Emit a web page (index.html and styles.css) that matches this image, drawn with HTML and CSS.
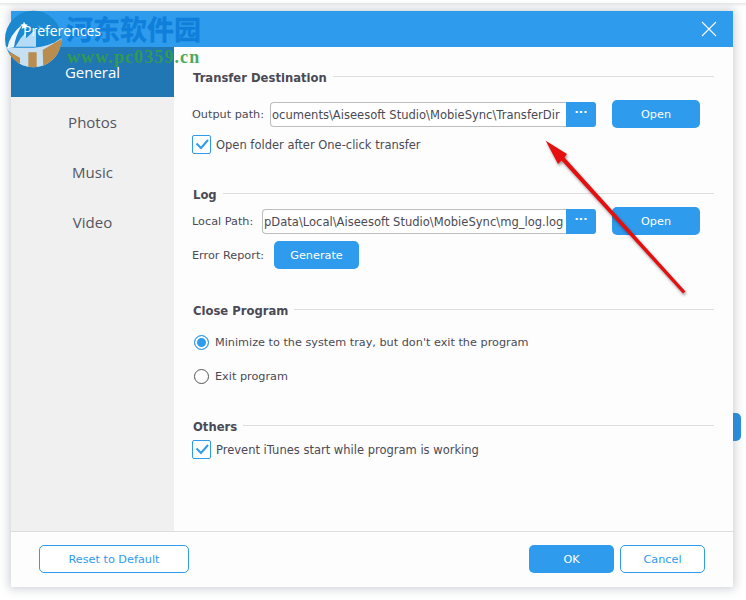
FILE: index.html
```html
<!DOCTYPE html>
<html lang="en">
<head>
<meta charset="utf-8">
<title>Preferences</title>
<link rel="stylesheet" href="styles.css">
</head>
<body>
<div class="side-tab"></div>
<div class="window">
  <header class="titlebar">
    <span class="title">Preferences</span>
    <svg class="close" width="16" height="16" viewBox="0 0 16 16"><path d="M1 1L15 15M15 1L1 15" stroke="#fff" stroke-width="1.1" fill="none"/></svg>
  </header>
  <div class="body">
    <nav class="sidebar">
      <div class="nav-item active">General</div>
      <div class="nav-item">Photos</div>
      <div class="nav-item">Music</div>
      <div class="nav-item">Video</div>
    </nav>
    <main class="content">
      <section class="section sec-transfer">
        <div class="heading"><span>Transfer Destination</span><i></i></div>
        <div class="row path-row">
          <label class="label w-output">Output path:</label>
          <div class="field"><div class="input">ocuments\Aiseesoft Studio\MobieSync\TransferDir</div><div class="dots">···</div></div>
          <button class="btn open">Open</button>
        </div>
        <div class="row check-row">
          <span class="check"><svg width="14" height="12" viewBox="0 0 14 12"><path d="M1.5 5.5L6 10L13 2" stroke="#2e9bec" stroke-width="2" fill="none"/></svg></span>
          <span class="text">Open folder after One-click transfer</span>
        </div>
      </section>
      <section class="section sec-log">
        <div class="heading"><span>Log</span><i></i></div>
        <div class="row path-row log-row">
          <label class="label w-local">Local Path:</label>
          <div class="field"><div class="input">pData\Local\Aiseesoft Studio\MobieSync\mg_log.log</div><div class="dots">···</div></div>
          <button class="btn open">Open</button>
        </div>
        <div class="row report-row">
          <label class="label w-report">Error Report:</label>
          <button class="btn generate">Generate</button>
        </div>
      </section>
      <section class="section sec-close">
        <div class="heading"><span>Close Program</span><i></i></div>
        <div class="row radio-row">
          <span class="radio on"></span>
          <span class="text">Minimize to the system tray, but don't exit the program</span>
        </div>
        <div class="row radio-row">
          <span class="radio"></span>
          <span class="text">Exit program</span>
        </div>
      </section>
      <section class="section sec-others">
        <div class="heading"><span>Others</span><i></i></div>
        <div class="row check-row">
          <span class="check"><svg width="14" height="12" viewBox="0 0 14 12"><path d="M1.5 5.5L6 10L13 2" stroke="#2e9bec" stroke-width="2" fill="none"/></svg></span>
          <span class="text">Prevent iTunes start while program is working</span>
        </div>
      </section>
    </main>
  </div>
  <footer class="footer">
    <button class="btn ghost reset">Reset to Default</button>
    <div class="footer-right">
      <button class="btn ok">OK</button>
      <button class="btn ghost cancel">Cancel</button>
    </div>
  </footer>
</div>

<svg class="logo" width="58" height="58" viewBox="12 15 174 174">
  <defs><clipPath id="disc"><circle cx="100" cy="102" r="85"/></clipPath></defs>
  <g clip-path="url(#disc)">
    <rect x="0" y="0" width="200" height="200" fill="#1b88cf"/>
    <path d="M15 125Q25 140 45 150L60 190H160L190 95Q150 125 100 128Q60 130 15 125Z" fill="#c6dff1"/>
    <path d="M128 135L190 98L185 150L130 190Z" fill="#b88d4f"/>
    <path d="M85 142H110V190H85Z" fill="#b88d4f"/>
    <path d="M28 140Q45 150 60 158V190H40Z" fill="#b88d4f"/>
    <path d="M46 125L62 100L78 82V125ZM78 100L108 72V125H78Z" fill="#b5dbf6"/>
    <path d="M125 70L172 90L165 112L128 122Z" fill="#1b88cf"/>
    <path d="M112 60L170 92L120 72Z" fill="#5aaee2"/>
    <path d="M22 130Q28 90 68 58Q46 92 42 126Z" fill="#eef6fc"/>
    <path d="M72 50l4 8 8 1-6 5 2 8-8-4-7 4 2-8-6-5 8-1z" fill="#fff"/>
  </g>
</svg>
<div class="wm-cn">河东软件园</div>
<div class="wm-url">www.pc0359.cn</div>

<svg class="arrow" width="160" height="170" viewBox="0 0 160 170">
  <path d="M6.7 8.7L28 22L25.5 25.5L146.5 159.5L144 161.5L22.5 28.5L19 32Z" fill="#e60f0f"/>
</svg>
</body>
</html>
```
FILE: styles.css
```css
* { box-sizing: border-box; }
html, body { margin: 0; height: 100%; }
body {
  background: linear-gradient(#fff 3px, #e9e9e9 3px, #f5f5f5 5px, #fff 7px);
  font-family: "DejaVu Sans", sans-serif;
  font-size: 11.25px;
  color: #4a4a55;
  overflow: hidden;
  padding: 11px 13px 13px 11px;
  position: relative;
}
.window {
  width: 722px;
  height: 576px;
  background: #fdfdfd;
  display: flex;
  flex-direction: column;
  box-shadow: 0 0 9px 2px rgba(90, 105, 125, .3);
  position: relative;
}
.titlebar {
  height: 36px;
  flex: none;
  background: #2e9bec;
  display: flex;
  align-items: center;
  justify-content: space-between;
  padding: 2px 16px 0 12px;
  color: #fff;
}
.title {
  font-family: "Open Sans", sans-serif;
  font-size: 14px;
  position: relative;
  z-index: 3;
}
.close { display: block; margin-top: -2px; }
.body { flex: 1; display: flex; min-height: 0; }
.sidebar { width: 163px; flex: none; background: #f0f0f0; }
.nav-item {
  height: 50px;
  display: flex;
  align-items: center;
  justify-content: center;
  font-family: "Open Sans", sans-serif;
  font-size: 15px;
  color: #555560;
}
.nav-item.active { background: #2176b4; color: #fff; }
.content { flex: 1; padding: 0 19px 0 18px; min-width: 0; }
.heading {
  display: flex;
  align-items: center;
  gap: 6px;
  height: 16px;
  font-weight: bold;
  font-size: 11.6px;
  color: #4a4a55;
  padding-left: 1px;
}
.heading i { flex: 1; height: 1px; background: #dddddd; margin-top: -3px; }
.sec-transfer { padding-top: 23px; }
.sec-log { margin-top: 34px; }
.sec-close { margin-top: 34px; }
.sec-others { margin-top: 35px; }
.row { display: flex; align-items: center; }
.path-row { height: 28px; margin-top: 14px; padding-top: 1px; }
.log-row { margin-top: 4px; }
.label { white-space: nowrap; flex: none; }
.w-output { width: 78px; }
.w-local { width: 70px; }
.w-report { width: 82px; }
.field { flex: 1; display: flex; height: 25px; min-width: 0; margin-top: -1px; }
.input {
  flex: 1;
  min-width: 0;
  font-size: 11.55px;
  border: 1px solid #bdbdbd;
  border-right: none;
  border-radius: 4px 0 0 4px;
  background: #fff;
  padding: 0 0 0 1px;
  line-height: 24px;
  white-space: nowrap;
  overflow: hidden;
}
.dots {
  width: 30px;
  flex: none;
  background: #2e9bec;
  color: #fff;
  border-radius: 0 3px 3px 0;
  text-align: center;
  font-weight: bold;
  line-height: 21px;
}
.btn {
  font-family: "DejaVu Sans", sans-serif;
  font-size: 11.25px;
  height: 28px;
  border: 0;
  border-radius: 5px;
  background: #2e9bec;
  color: #fff;
  padding: 1px 0 0;
}
.open { width: 88px; margin: -1px 14px 0 16px; flex: none; }
.check-row { height: 18px; margin-top: 5px; padding-top: 1px; }
.sec-transfer .check-row { margin-top: 7px; }
.check {
  width: 19px;
  height: 19px;
  border: 1px solid #2e9bec;
  border-radius: 2px;
  display: flex;
  align-items: center;
  justify-content: center;
  flex: none;
  background: #fff;
  margin-top: -1px;
}
.check-row .text { margin-left: 5px; font-size: 11.5px; }
.report-row { height: 28px; margin-top: 6px; }
.generate { width: 85px; }
.radio-row { height: 16px; margin-top: 18px; padding-left: 2px; }
.sec-close .heading + .radio-row { margin-top: 15px; }
.radio {
  width: 15px;
  height: 15px;
  border-radius: 50%;
  border: 1px solid #555;
  flex: none;
  background: #fff;
}
.radio.on {
  border-color: #2e9bec;
  background: #2e9bec;
  box-shadow: inset 0 0 0 2px #fff;
}
.radio-row .text { margin-left: 6px; }
.footer {
  height: 56px;
  flex: none;
  border-top: 1px solid #dddddd;
  display: flex;
  justify-content: space-between;
  align-items: flex-start;
  padding: 13px 28px 0;
}
.footer-right { display: flex; gap: 6px; }
.ghost { background: #fff; border: 1px solid #2e9bec; color: #2e9bec; }
.reset { width: 150px; }
.ok, .cancel { width: 85px; }
.side-tab {
  position: absolute;
  left: 725px;
  top: 413px;
  width: 16px;
  height: 28px;
  border-radius: 5px;
  background: #2790e0;
}
.logo { position: absolute; left: 4px; top: 10px; z-index: 2; }
.wm-cn {
  position: absolute;
  left: 66px;
  top: 11px;
  font: bold 27px/36px "Noto Sans CJK SC", sans-serif;
  color: rgba(12, 125, 218, .92);
  -webkit-text-stroke: .4px rgba(12, 125, 218, .92);
  white-space: nowrap;
}
.wm-url {
  position: absolute;
  left: 67px;
  top: 47px;
  font: bold 18px/20px "Liberation Serif", serif;
  letter-spacing: 1.1px;
  color: rgba(50, 160, 70, .9);
  white-space: nowrap;
}
.arrow {
  position: absolute;
  left: 539px;
  top: 132px;
  filter: drop-shadow(1px 2px 1.5px rgba(0, 0, 0, .4));
}
```
